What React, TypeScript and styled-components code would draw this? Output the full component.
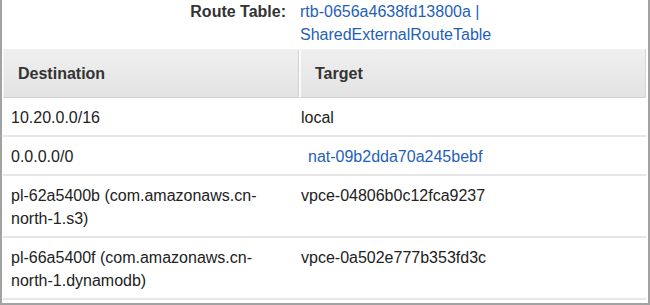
import React from "react";
import styled, { createGlobalStyle } from "styled-components";

const Global = createGlobalStyle`
  html, body { margin: 0; padding: 0; background: #ffffff; }
  body { font-family: "Liberation Sans", Arial, Helvetica, sans-serif; }
`;

const Frame = styled.div`
  box-sizing: border-box;
  width: 650px;
  height: 305px;
  overflow: hidden;
  border-left: 2px solid #a2a2a2;
  border-right: 2px solid #a2a2a2;
  border-bottom: 2px solid #a2a2a2;
  background: #ffffff;
  font-size: 16px;
  color: #222222;
`;

const Summary = styled.div`
  display: grid;
  grid-template-columns: 284px 200px;
  column-gap: 14px;
  line-height: 23px;
  margin-bottom: 3px;
`;

const Label = styled.div`
  text-align: right;
  font-weight: bold;
  color: #333333;
`;

const Link = styled.a<{ $indent?: number }>`
  color: #1f5fb8;
  text-decoration: none;
  margin-left: ${(p) => p.$indent ?? 0}px;
`;

const Table = styled.div`
  display: grid;
  grid-template-columns: 296px 1fr;
  margin: 0 0 0 1px;
  width: 643px;
`;

const HeadCell = styled.div<{ $first?: boolean }>`
  box-sizing: border-box;
  height: 49px;
  display: flex;
  align-items: center;
  padding-left: 14px;
  font-weight: bold;
  color: #333333;
  background: linear-gradient(#efefef, #e3e3e3);
  border-bottom: 1px solid #cfcfcf;
  border-top: 1px solid #f2f2f2;
  border-right: ${(p) => (p.$first ? "1px solid #d2d2d2" : "1px solid #d6d6d6")};
  border-left: ${(p) => (p.$first ? "1px solid #f4f4f4" : "2px solid #fbfbfb")};
`;

const Cell = styled.div<{ $first?: boolean }>`
  box-sizing: border-box;
  padding: 8px 8px 6px ${(p) => (p.$first ? 8 : 2)}px;
  line-height: 23px;
  border-bottom: 2px solid #e6e6e6;
  color: #222222;
`;

type Row = { dest: string[]; target: string; link?: boolean };

const rows: Row[] = [
  { dest: ["10.20.0.0/16"], target: "local" },
  { dest: ["0.0.0.0/0"], target: "nat-09b2dda70a245bebf", link: true },
  { dest: ["pl-62a5400b (com.amazonaws.cn-", "north-1.s3)"], target: "vpce-04806b0c12fca9237" },
  { dest: ["pl-66a5400f (com.amazonaws.cn-", "north-1.dynamodb)"], target: "vpce-0a502e777b353fd3c" },
];

export default function App() {
  return (
    <>
      <Global />
      <Frame>
        <Summary>
          <Label>Route Table:</Label>
          <div>
            <Link href="#">rtb-0656a4638fd13800a | SharedExternalRouteTable</Link>
          </div>
        </Summary>
        <Table>
          <HeadCell $first>Destination</HeadCell>
          <HeadCell>Target</HeadCell>
          {rows.map((r, i) => (
            <React.Fragment key={i}>
              <Cell $first>
                {r.dest.map((d, j) => (
                  <div key={j}>{d}</div>
                ))}
              </Cell>
              <Cell>
                {r.link ? <Link href="#" $indent={7}>{r.target}</Link> : r.target}
              </Cell>
            </React.Fragment>
          ))}
        </Table>
      </Frame>
    </>
  );
}
